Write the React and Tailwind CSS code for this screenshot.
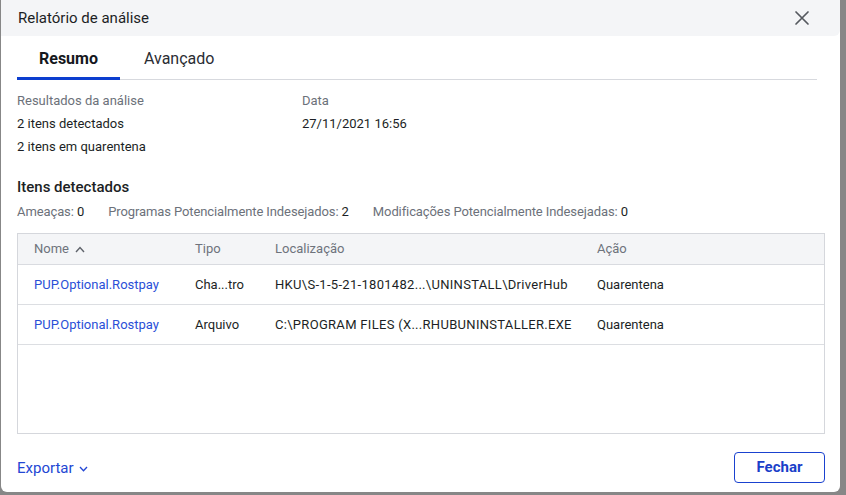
const ROWS = [
  {
    name: 'PUP.Optional.Rostpay',
    type: 'Cha...tro',
    location: 'HKU\\S-1-5-21-1801482...\\UNINSTALL\\DriverHub',
    action: 'Quarentena',
  },
  {
    name: 'PUP.Optional.Rostpay',
    type: 'Arquivo',
    location: 'C:\\PROGRAM FILES (X...RHUBUNINSTALLER.EXE',
    action: 'Quarentena',
  },
];

function CloseIcon() {
  return (
    <svg width="16" height="16" viewBox="0 0 16 16" fill="none" stroke="#55595f" strokeWidth="1.7" strokeLinecap="round">
      <path d="M2 2l12 12M14 2L2 14" />
    </svg>
  );
}

function ChevronUp() {
  return (
    <svg width="10" height="7" viewBox="0 0 10 7" fill="none" stroke="#5f636b" strokeWidth="1.4">
      <path d="M1 6l4-4.5L9 6" />
    </svg>
  );
}

function ChevronDown() {
  return (
    <svg width="9" height="6" viewBox="0 0 9 6" fill="none" stroke="#2347d4" strokeWidth="1.3">
      <path d="M1 1l3.5 3.8L8 1" />
    </svg>
  );
}

export default function App() {
  return (
    <div
      className="w-[846px] h-[495px] bg-[#878787] overflow-hidden"
      style={{ fontFamily: 'Roboto, "Noto Sans", sans-serif' }}
    >
      <div className="ml-[1px] w-[839px] h-[492px] bg-white rounded-b-[6px] flex flex-col">
        {/* header */}
        <div className="h-[36px] bg-[#f4f5f7] flex items-center justify-between pl-[17px] pr-[26px] rounded-br-[6px]">
          <h2 className="text-[15px] text-[#1c1f25]">Relatório de análise</h2>
          <button className="p-1">
            <CloseIcon />
          </button>
        </div>

        <div className="px-[16px] flex flex-col flex-1">
          {/* tabs */}
          <div className="w-[800px] flex border-b border-[#d7d9de] h-[44px]">
            <div className="px-[22px] flex items-center border-b-[3px] border-[#0c3ecf] -mb-[1px] pt-[4px] text-[16px] font-bold text-[#15181d]">
              Resumo
            </div>
            <div className="px-[24px] flex items-center pt-[3px] text-[16px] text-[#2a2d33]">
              Avançado
            </div>
          </div>

          {/* summary */}
          <div className="mt-[9px] flex text-[13px] leading-[23px]">
            <div className="w-[285px]">
              <div className="text-[#6c717a]">Resultados da análise</div>
              <div className="text-[#1c1f25]">2 itens detectados</div>
              <div className="text-[#1c1f25]">2 itens em quarentena</div>
            </div>
            <div>
              <div className="text-[#6c717a]">Data</div>
              <div className="text-[#1c1f25]">27/11/2021 16:56</div>
            </div>
          </div>

          <h3 className="mt-[18px] text-[15px] leading-[22px] font-medium text-[#1c1f25]">Itens detectados</h3>
          <div className="mt-[3px] flex gap-[24px] text-[13px] leading-[22px] text-[#6c717a] tracking-[-0.1px]">
            <span>
              Ameaças: <span className="text-[#1c1f25]">0</span>
            </span>
            <span>
              Programas Potencialmente Indesejados: <span className="text-[#1c1f25]">2</span>
            </span>
            <span>
              Modificações Potencialmente Indesejadas: <span className="text-[#1c1f25]">0</span>
            </span>
          </div>

          {/* table */}
          <div className="mt-[10px] w-[808px] h-[201px] border border-[#d5d7dc] text-[13px]">
            <div className="grid grid-cols-[177px_80px_322px_1fr] h-[31px] items-center bg-[#f4f5f7] border-b border-[#d9dbe0] text-[#6e737c]">
              <div className="pl-[16px] flex items-center gap-[6px]">
                Nome <ChevronUp />
              </div>
              <div>Tipo</div>
              <div>Localização</div>
              <div>Ação</div>
            </div>
            {ROWS.map((r, i) => (
              <div
                key={i}
                className="grid grid-cols-[177px_80px_322px_1fr] h-[40px] items-center border-b border-[#dcdee2] text-[#1c1f25]"
              >
                <div className="pl-[16px] text-[#2a4fd7]">{r.name}</div>
                <div>{r.type}</div>
                <div className="whitespace-nowrap tracking-[0.3px]">{r.location}</div>
                <div>{r.action}</div>
              </div>
            ))}
          </div>

          {/* footer */}
          <div className="mt-[18px] w-[808px] flex items-center justify-between">
            <button className="flex items-center gap-[5px] text-[15px] text-[#2347d4] pt-[2px]">
              Exportar <ChevronDown />
            </button>
            <button className="w-[91px] h-[31px] rounded-[4px] border border-[#1a42cf] text-[15px] font-bold text-[#1a3fc9]">
              Fechar
            </button>
          </div>
        </div>
      </div>
    </div>
  );
}
